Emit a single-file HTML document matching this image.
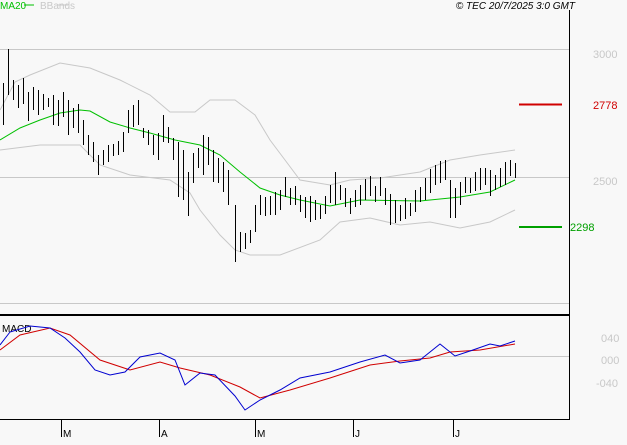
<!DOCTYPE html>
<html><head><meta charset="utf-8"><style>
html,body{margin:0;padding:0;background:#f8f8f8;}
body{width:627px;height:440px;overflow:hidden;font-family:"Liberation Sans",sans-serif;}
svg text{font-family:"Liberation Sans",sans-serif;}
</style></head><body>
<svg width="627" height="440" viewBox="0 0 627 440" xmlns="http://www.w3.org/2000/svg">
<rect width="627" height="440" fill="#f8f8f8"/>
<text x="0" y="9" font-size="10" fill="#00c000">MA20</text>
<line x1="24" y1="5" x2="34" y2="5" stroke="#00c000"/>
<text x="40" y="9" font-size="10" fill="#c8c8c8">BBands</text>
<line x1="58" y1="5" x2="68" y2="5" stroke="#c8c8c8"/>
<text x="575" y="9" font-size="10" font-style="italic" fill="#000" text-anchor="end">© TEC 20/7/2025 3:0 GMT</text>
<g stroke="#c8c8c8" fill="none">
<line x1="0" y1="49.5" x2="569" y2="49.5"/>
<line x1="0" y1="177.5" x2="569" y2="177.5"/>
<line x1="0" y1="303.5" x2="569" y2="303.5"/>
<line x1="0" y1="356.5" x2="569" y2="356.5"/>
<polyline points="0,110 15,82 30,75 60,63 90,68 120,80 150,95 170,112 195,112 210,100 235,100 255,115 270,140 285,160 300,180 330,185 350,180 380,178 420,172 450,160 480,155 515,150"/>
<polyline points="0,150 40,145 80,145 100,165 130,175 170,180 190,193 200,210 220,235 235,250 250,255 280,255 320,240 340,222 370,218 400,225 430,222 460,228 490,222 515,210"/>
</g>
<polyline fill="none" stroke="#00c000" points="0,140 20,128 40,120 60,113 80,110 90,111 110,122 130,128 150,133 175,140 200,145 220,155 240,172 260,188 280,195 300,200 330,206 360,200 420,201 460,197 490,192 515,180"/>
<path stroke="#000" fill="none" d="
M3.5 83V125 M8.5 49V95 M13.5 80V100 M18.5 85V108 M23.5 78V104 M28.5 92V121 M33.5 87V110 M38.5 90V115 M43.5 94V110 M48.5 98V107
M53.5 95V125 M58.5 100V126 M63.5 92V117 M68.5 100V135 M73.5 108V128 M78.5 104V133 M83.5 120V145 M88.5 135V155 M93.5 142V162
M98.5 155V175 M103.5 150V165 M108.5 145V162 M113.5 144V156 M118.5 141V155 M123.5 132V152 M128.5 110V133 M133.5 105V127 M138.5 100V125 M143.5 128V138
M148.5 130V145 M153.5 135V155 M158.5 133V160 M163.5 115V142 M168.5 127V143 M173.5 138V160 M178.5 142V197 M183.5 150V200 M188.5 172V216 M193.5 153V183
M198.5 148V168 M203.5 135V175 M208.5 137V165 M213.5 150V182 M218.5 158V183 M223.5 162V192 M228.5 170V205 M235.5 205V262 M240.5 232V252 M245.5 233V249
M250.5 230V243 M255.5 205V232 M260.5 195V215 M265.5 197V216 M270.5 196V215 M275.5 192V215 M280.5 190V210 M285.5 177V197 M290.5 188V205 M295.5 186V205
M300.5 195V212 M305.5 197V218 M310.5 196V222 M315.5 200V220 M320.5 205V219 M325.5 196V214 M330.5 185V203 M335.5 172V205 M340.5 185V200 M345.5 188V207
M350.5 198V214 M355.5 190V207 M360.5 185V205 M365.5 179V200 M370.5 176V196 M375.5 186V202 M380.5 177V196 M385.5 188V205 M390.5 194V225 M395.5 200V223
M400.5 205V221 M405.5 198V219 M410.5 203V216 M415.5 190V212 M420.5 187V202 M425.5 178V200 M430.5 169V193 M435.5 165V185 M440.5 161V183 M445.5 160V180
M450.5 180V218 M455.5 188V218 M460.5 182V205 M465.5 177V193 M470.5 178V193 M475.5 172V191 M480.5 168V190 M485.5 168V185 M490.5 170V196 M495.5 175V190
M500.5 168V187 M505.5 162V185 M510.5 160V176 M515.5 163V178"/>
<line x1="519" y1="104.5" x2="562" y2="104.5" stroke="#d00000" stroke-width="2"/>
<line x1="519" y1="227" x2="562" y2="227" stroke="#00a000" stroke-width="2"/>
<line x1="0" y1="315" x2="570" y2="315" stroke="#000" stroke-width="2"/>
<line x1="569.5" y1="10" x2="569.5" y2="419" stroke="#000"/>
<line x1="0" y1="419.5" x2="570" y2="419.5" stroke="#000"/>
<text x="2" y="332" font-size="10" fill="#000">MACD</text>
<polyline fill="none" stroke="#d00000" points="0,350 20,335 50,328 70,335 100,360 130,370 160,362 180,368 210,375 240,387 260,398 290,390 330,378 370,365 400,361 430,358 450,352 480,350 515,344"/>
<polyline fill="none" stroke="#0000d0" points="0,345 10,332 30,326 50,328 65,338 80,352 95,370 110,375 125,372 140,357 160,353 175,360 185,385 200,373 215,375 235,396 245,410 260,400 280,390 300,378 330,372 360,362 385,355 400,363 420,360 440,344 455,356 470,351 490,344 500,346 515,341"/>
<g font-size="11" fill="#c8c8c8">
<text x="593" y="58">3000</text>
<text x="593" y="185">2500</text>
<text x="601" y="342">040</text>
<text x="601" y="364">000</text>
<text x="596" y="387">-040</text>
</g>
<text x="593" y="109" font-size="11" fill="#d00000">2778</text>
<text x="570" y="231" font-size="11" fill="#00a000">2298</text>
<g stroke="#000">
<line x1="61.5" y1="420" x2="61.5" y2="437"/>
<line x1="159.5" y1="420" x2="159.5" y2="437"/>
<line x1="255.5" y1="420" x2="255.5" y2="437"/>
<line x1="353.5" y1="420" x2="353.5" y2="437"/>
<line x1="453.5" y1="420" x2="453.5" y2="437"/>
</g>
<g font-size="10" fill="#000">
<text x="63" y="437">M</text>
<text x="161" y="437">A</text>
<text x="257" y="437">M</text>
<text x="355" y="437">J</text>
<text x="455" y="437">J</text>
</g>
</svg>
</body></html>
